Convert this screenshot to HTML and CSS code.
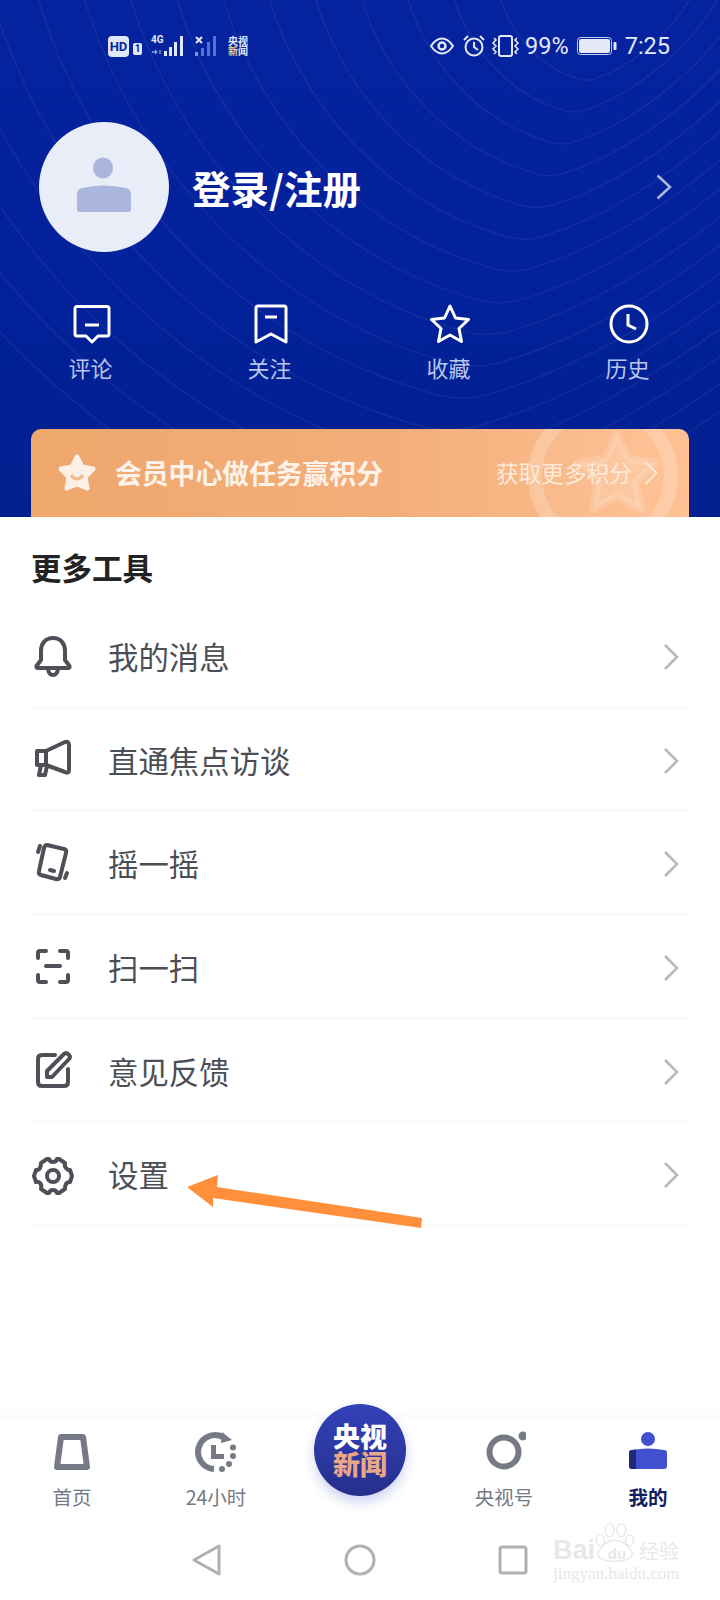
FILE: index.html
```html
<!DOCTYPE html>
<html lang="zh-CN">
<head>
    <meta charset="UTF-8">
    <meta name="viewport" content="width=device-width, initial-scale=1.0">
    <title>我的</title>
    <link rel="stylesheet" href="styles.css">
</head>
<body>
    <!-- Blue header -->
    <header class="hero">
        <svg class="contours" viewBox="0 0 720 517" fill="none">
            <defs>
                <path id="ring" d="M-1.5 -0.25C-1.42 0.35 -1 0.82 -0.5 0.97C-0.42 1 -0.36 1 -0.28 0.97C0.1 0.85 0.65 0.45 0.95 -0.12"/>
            </defs>
            <g class="contour-lines">
                <use href="#ring" transform="translate(618 0) scale(81)"/>
                <use href="#ring" transform="translate(618 0) scale(113)"/>
                <use href="#ring" transform="translate(618 0) scale(145)"/>
                <use href="#ring" transform="translate(618 0) scale(177)"/>
                <use href="#ring" transform="translate(618 0) scale(209)"/>
                <use href="#ring" transform="translate(618 0) scale(241)"/>
                <use href="#ring" transform="translate(618 0) scale(273)"/>
                <use href="#ring" transform="translate(618 0) scale(305)"/>
                <use href="#ring" transform="translate(618 0) scale(337)"/>
                <use href="#ring" transform="translate(618 0) scale(369)"/>
                <use href="#ring" transform="translate(618 0) scale(401)"/>
                <use href="#ring" transform="translate(618 0) scale(433)"/>
                <use href="#ring" transform="translate(618 0) scale(465)"/>
                <use href="#ring" transform="translate(618 0) scale(497)"/>
                <use href="#ring" transform="translate(618 0) scale(529)"/>
                <use href="#ring" transform="translate(618 0) scale(561)"/>
            </g>
        </svg>

        <div class="status-bar">
            <div class="status-left">
                <span class="hd-badge">HD</span>
                <span class="sim-badge">1</span>
                <svg class="signal" width="36" height="22" viewBox="0 0 36 22">
                    <text x="0" y="8" class="signal-label">4G</text>
                    <path d="M1 17h4M4 15l2 2-2 2M9 15v4" stroke="#8fa0dc" stroke-width="1.3" fill="none"/>
                    <rect x="13" y="16" width="3" height="5" fill="#e3e8f8"/>
                    <rect x="18" y="12" width="3" height="9" fill="#e3e8f8"/>
                    <rect x="23" y="7" width="3" height="14" fill="#e3e8f8"/>
                    <rect x="29" y="1" width="3" height="20" fill="#e3e8f8"/>
                </svg>
                <svg class="signal-off" width="24" height="22" viewBox="0 0 24 22">
                    <path d="M1 2l6 6M7 2l-6 6" stroke="#e3e8f8" stroke-width="2"/>
                    <rect x="0" y="17" width="3" height="4" fill="#7f92d6"/>
                    <rect x="6" y="13" width="3" height="8" fill="#5a72c8"/>
                    <rect x="12" y="7" width="3" height="14" fill="#5a72c8"/>
                    <rect x="18" y="1" width="3" height="20" fill="#5a72c8"/>
                </svg>
                <div class="cctv-mini">央视<br><em>新</em>闻</div>
            </div>
            <div class="status-right">
                <svg width="24" height="18" viewBox="0 0 24 18" fill="none" stroke="#e3e8f8">
                    <path d="M1 9C5 3 9 1.500 12 1.500S19 3 23 9C19 15 15 16.500 12 16.500S5 15 1 9Z" stroke-width="2"/>
                    <circle cx="12" cy="9" r="3.500" stroke-width="2.500"/>
                </svg>
                <svg class="alarm" width="24" height="24" viewBox="0 0 24 24" fill="none" stroke="#e3e8f8" stroke-width="2">
                    <circle cx="12" cy="13" r="8.500"/>
                    <path d="M12 8v5l4 3M2 6l4-4M22 6l-4-4"/>
                </svg>
                <svg class="vibrate" width="30" height="22" viewBox="0 0 30 22" fill="none" stroke="#e3e8f8">
                    <rect x="8" y="1" width="13" height="20" rx="2" stroke-width="2"/>
                    <path d="M3 3l2 2-3 3 3 3-3 3 3 3-2 2M26 3l-2 2 3 3-3 3 3 3-3 3 2 2" stroke-width="1.600"/>
                </svg>
                <span class="status-text">99%</span>
                <svg class="battery" width="40" height="18" viewBox="0 0 40 18">
                    <rect x="0.500" y="0.500" width="34" height="17" rx="3" fill="none" stroke="#c8d1f0"/>
                    <rect x="2" y="2" width="31" height="14" rx="2" fill="#e6eaf8"/>
                    <rect x="36.500" y="5" width="3" height="8" rx="1" fill="#e3e8f8"/>
                </svg>
                <span class="status-text time">7:25</span>
            </div>
        </div>

        <div class="profile">
            <div class="avatar">
                <svg width="130" height="130" viewBox="0 0 130 130" fill="#aab6dd">
                    <ellipse cx="64" cy="46" rx="10" ry="10.500"/>
                    <path d="M38 72Q38 67 43 66Q64 61 87 66Q92 67 92 72V87Q92 90 89 90H41Q38 90 38 87Z"/>
                </svg>
            </div>
            <h1 class="login">登录/注册</h1>
            <svg class="profile-arrow" width="16" height="26" viewBox="0 0 16 26" fill="none">
                <path d="M1.500 1.500L14 13L1.500 24.500" stroke="#a9b6e0" stroke-width="2.500"/>
            </svg>
        </div>

        <nav class="shortcuts">
            <div class="shortcut">
                <svg width="40" height="40" viewBox="0 0 40 40" fill="none" stroke="#fff" stroke-width="3" stroke-linejoin="round">
                    <path d="M5 2.500H35A2 2 0 0 1 37 4.500V30A2 2 0 0 1 35 32H26L20 38L14 32H5A2 2 0 0 1 3 30V4.500A2 2 0 0 1 5 2.500Z"/>
                    <path d="M13 21H27"/>
                </svg>
                <span>评论</span>
            </div>
            <div class="shortcut">
                <svg width="40" height="40" viewBox="0 0 40 40" fill="none" stroke="#fff" stroke-width="3" stroke-linejoin="round">
                    <path d="M7 2H33Q35 2 35 4V38L20 30L5 38V4Q5 2 7 2Z"/>
                    <path d="M14 13H26"/>
                </svg>
                <span>关注</span>
            </div>
            <div class="shortcut">
                <svg width="40" height="40" viewBox="0 0 40 40" fill="none" stroke="#fff" stroke-width="3" stroke-linejoin="round">
                    <path d="M20 2L25.500 14L38.500 15.500L29 24.500L31.500 37.500L20 31L8.500 37.500L11 24.500L1.500 15.500L14.500 14Z"/>
                </svg>
                <span>收藏</span>
            </div>
            <div class="shortcut">
                <svg width="40" height="40" viewBox="0 0 40 40" fill="none" stroke="#fff" stroke-width="3">
                    <circle cx="20" cy="20" r="18"/>
                    <path d="M19 10V21L27 25"/>
                </svg>
                <span>历史</span>
            </div>
        </nav>

        <div class="banner">
            <div class="banner-ring"></div>
            <svg class="banner-ghost" width="90" height="88" viewBox="0 0 90 88">
                <path d="M45 6L57 30L84 34L64 53L69 80L45 68L21 80L26 53L6 34L33 30Z" fill="#fff" fill-opacity="0.14" stroke="#fff" stroke-opacity="0.14" stroke-width="8" stroke-linejoin="round"/>
            </svg>
            <svg class="banner-star" width="42" height="40" viewBox="0 0 42 40">
                <path d="M21 4L26 14L37 16L29 24L31 35L21 31L11 35L13 24L5 16L16 14Z" fill="#fdf0e6" stroke="#fdf0e6" stroke-width="5" stroke-linejoin="round"/>
                <path d="M15 22Q21 30 27 22" fill="none" stroke="#f4b98a" stroke-width="3"/>
            </svg>
            <span class="banner-title">会员中心做任务赢积分</span>
            <span class="banner-more">获取更多积分</span>
            <svg class="banner-arrow" width="14" height="24" viewBox="0 0 14 24" fill="none">
                <path d="M1.500 1L12.500 12L1.500 23" stroke="#fde9d8" stroke-width="2"/>
            </svg>
        </div>
    </header>

    <!-- Tools list -->
    <main class="tools">
        <h2 class="tools-title">更多工具</h2>
        <ul class="tool-list">
            <li class="tool-row">
                <svg class="tool-icon" viewBox="0 0 44 44">
                    <path d="M22 5C14 5 10 11 10 18V27L5.500 33Q5 35 7 35H37Q39 35 38.500 33L34 27V18C34 11 30 5 22 5Z"/>
                    <path d="M17 36Q18 42 22 42T27 36"/>
                </svg>
                <span>我的消息</span>
                <svg class="chevron" width="16" height="28" viewBox="0 0 16 28"><path d="M2 2L14 14L2 26"/></svg>
            </li>
            <li class="tool-row">
                <svg class="tool-icon" viewBox="0 0 44 44">
                    <path d="M6 14H15L34 5Q38 4 38 8V33Q38 37 34 35L15 28H6Z"/>
                    <path d="M15 14V28M10 28L8 38H14L16 29"/>
                </svg>
                <span>直通焦点访谈</span>
                <svg class="chevron" width="16" height="28" viewBox="0 0 16 28"><path d="M2 2L14 14L2 26"/></svg>
            </li>
            <li class="tool-row">
                <svg class="tool-icon" viewBox="0 0 44 44">
                    <path d="M16 4L33 8Q36 9 35 12L29 36Q28 39 25 38L10 34Q7 33 8 30L13 7Q14 4 16 4Z"/>
                    <path d="M19 29L23 30M9 5L7 11M36 32L34 37"/>
                </svg>
                <span>摇一摇</span>
                <svg class="chevron" width="16" height="28" viewBox="0 0 16 28"><path d="M2 2L14 14L2 26"/></svg>
            </li>
            <li class="tool-row">
                <svg class="tool-icon" viewBox="0 0 44 44">
                    <path d="M15 7H9Q7 7 7 9V14M29 7H35Q37 7 37 9V14M15 38H9Q7 38 7 36V31M29 38H35Q37 38 37 36V31M15 22H29"/>
                </svg>
                <span>扫一扫</span>
                <svg class="chevron" width="16" height="28" viewBox="0 0 16 28"><path d="M2 2L14 14L2 26"/></svg>
            </li>
            <li class="tool-row">
                <svg class="tool-icon" viewBox="0 0 44 44">
                    <path d="M24 7H11Q7 7 7 11V34Q7 38 11 38H33Q37 38 37 34V21"/>
                    <path d="M16 29V23L33 6Q35 4 37 6L38 7Q40 9 38 11L21 29Z"/>
                </svg>
                <span>意见反馈</span>
                <svg class="chevron" width="16" height="28" viewBox="0 0 16 28"><path d="M2 2L14 14L2 26"/></svg>
            </li>
            <li class="tool-row">
                <svg class="tool-icon gear" viewBox="0 0 44 44">
                    <path d="M16 5H18Q19 8 22 8T26 5H28L34 9Q33 13 36 15T39 16L41 22L39 28Q36 28 35 30T34 35L28 39H26Q25 36 22 36T18 39H16L10 35Q11 31 9 29T5 28L3 22L5 16Q8 16 9 14T10 9Z"/>
                    <circle cx="22" cy="22" r="6"/>
                </svg>
                <span>设置</span>
                <svg class="chevron" width="16" height="28" viewBox="0 0 16 28"><path d="M2 2L14 14L2 26"/></svg>
            </li>
        </ul>
    </main>

    <!-- Orange pointer drawn over the screenshot -->
    <svg class="pointer" width="250" height="60" viewBox="0 0 250 60">
        <path d="M2 12L33 0L32 12L237 43L236 53L28 23L28 32Z" fill="#ff8f3a"/>
    </svg>

    <!-- Bottom tabs -->
    <div class="tab-bar">
        <div class="tab">
            <svg width="44" height="44" viewBox="0 0 44 44" fill="#fff" stroke="#757a84" stroke-width="6" stroke-linejoin="round">
                <path d="M11 7H33L37 37H7Z"/>
            </svg>
            <span>首页</span>
        </div>
        <div class="tab">
            <svg width="44" height="44" viewBox="0 0 44 44" fill="#757a84">
                <path d="M29 7A17 17 0 1 0 20 39" fill="none" stroke="#757a84" stroke-width="6"/>
                <path d="M28 2L38 10L27 13Z"/>
                <circle cx="39" cy="17.500" r="3"/>
                <circle cx="39" cy="26" r="3"/>
                <circle cx="35" cy="34" r="3"/>
                <circle cx="28" cy="39" r="3"/>
                <path d="M19.500 15V26.500H30" fill="none" stroke="#757a84" stroke-width="5"/>
            </svg>
            <span>24小时</span>
        </div>
        <div class="tab-center">
            <div class="cctv-button">央视<br><em>新闻</em></div>
        </div>
        <div class="tab">
            <svg width="44" height="44" viewBox="0 0 44 44" fill="none">
                <ellipse cx="22" cy="22" rx="14.500" ry="14.500" stroke="#757a84" stroke-width="6"/>
                <circle cx="41" cy="6" r="4.500" fill="#757a84"/>
            </svg>
            <span>央视号</span>
        </div>
        <div class="tab tab-active">
            <svg width="44" height="44" viewBox="0 0 44 44">
                <circle cx="22" cy="9" r="7" fill="#4150cf"/>
                <path d="M3 23Q3 20 6 20Q22 17 38 20Q41 20 41 23V36Q41 39 38 39H6Q3 39 3 36Z" fill="#4150cf"/>
                <path d="M3 23Q3 20 6 20L10 19.500V39H6Q3 39 3 36Z" fill="#1f2a7a"/>
            </svg>
            <span>我的</span>
        </div>
    </div>

    <!-- Android nav keys -->
    <div class="nav-keys">
        <svg width="40" height="40" viewBox="0 0 40 40"><path d="M7 20L32 6V34Z"/></svg>
        <svg width="40" height="40" viewBox="0 0 40 40"><circle cx="20" cy="20" r="14"/></svg>
        <svg width="40" height="40" viewBox="0 0 40 40"><rect x="7" y="7" width="26" height="26" rx="2"/></svg>
    </div>

    <!-- Watermark -->
    <div class="watermark">
        <svg class="paw" width="40" height="40" viewBox="0 0 44 44" fill="none" stroke="#e8e8e8" stroke-width="1.500">
            <ellipse cx="6" cy="19" rx="4.500" ry="6"/>
            <ellipse cx="16" cy="8" rx="5" ry="7"/>
            <ellipse cx="29" cy="8" rx="5" ry="7"/>
            <ellipse cx="38" cy="19" rx="4.500" ry="6"/>
            <path d="M3 33Q10 19 22 19T41 33Q41 42 22 42T3 33Z"/>
        </svg>
        <div class="wm-main"><span>Bai</span><span class="wm-du">du</span><span class="wm-cn">经验</span></div>
        <div class="wm-url">jingyan.baidu.com</div>
    </div>
</body>
</html>
```

FILE: styles.css
```css
* {
    box-sizing: border-box;
}
body {
    position: relative;
    display: flex;
    flex-direction: column;
    width: 720px;
    height: 1600px;
    margin: 0;
    overflow: hidden;
    background-color: #fff;
    font-family: "Noto Sans CJK SC", Roboto, sans-serif;
}

/* header */
.hero {
    position: relative;
    height: 517px;
    overflow: hidden;
    background: linear-gradient(180deg, #05239f 0%, #03219a 55%, #02208e 100%);
}
.contours {
    position: absolute;
    top: 0;
    left: 0;
    width: 720px;
    height: 517px;
}
.contour-lines use {
    stroke: rgba(255, 255, 255, 0.06);
    stroke-width: 1.5px;
}
.contours path {
    vector-effect: non-scaling-stroke;
}

/* status bar */
.status-bar {
    position: relative;
    display: flex;
    justify-content: space-between;
    align-items: center;
    height: 92px;
    padding: 0 50px 0 108px;
    color: #e3e8f8;
}
.status-left,
.status-right {
    display: flex;
    align-items: center;
}
.hd-badge {
    width: 21px;
    height: 21px;
    border-radius: 4px;
    background-color: #e3e8f8;
    color: #05239f;
    font: bold 13px/21px Roboto, sans-serif;
    text-align: center;
}
.sim-badge {
    width: 9px;
    height: 12px;
    margin: 6px 0 0 4px;
    border-radius: 2px;
    background-color: #e3e8f8;
    color: #05239f;
    font: bold 10px/12px Roboto, sans-serif;
    text-align: center;
}
.signal {
    margin-left: 9px;
}
.signal-label {
    fill: #e3e8f8;
    font: bold 10px Roboto, sans-serif;
}
.signal-off {
    margin-left: 8px;
}
.cctv-mini {
    margin-left: 9px;
    font-size: 10px;
    font-weight: 700;
    line-height: 10.5px;
    color: #e3e8f8;
}
.cctv-mini em {
    font-style: normal;
    color: #e5cf8f;
}
.status-text {
    font: 23.500px Roboto, sans-serif;
}
.status-right .alarm {
    margin-left: 8px;
}
.status-right .vibrate {
    margin-left: 5px;
}
.status-right .status-text {
    margin-left: 4px;
}
.status-right .battery {
    margin-left: 8px;
}
.status-right .time {
    margin-left: 8px;
}

/* profile row */
.profile {
    position: relative;
    display: flex;
    align-items: center;
    height: 130px;
    margin-top: 30px;
    padding: 0 48px 0 39px;
}
.avatar {
    width: 130px;
    height: 130px;
    border-radius: 50%;
    background-color: #e9edf8;
}
.avatar svg {
    display: block;
}
.login {
    flex: 1;
    margin: 0 0 0 23px;
    color: #fff;
    font-size: 38.500px;
    font-weight: 700;
}

/* shortcuts */
.shortcuts {
    position: relative;
    display: grid;
    grid-template-columns: repeat(4, 1fr);
    margin-top: 52px;
    padding: 0 2px;
}
.shortcut {
    display: flex;
    flex-direction: column;
    align-items: center;
    color: #bac6ee;
    font-size: 22px;
    line-height: 32px;
}
.shortcut svg {
    margin-bottom: 7px;
}
.shortcut span {
    margin-right: 2px;
}

/* member banner */
.banner {
    position: relative;
    display: flex;
    align-items: center;
    height: 90px;
    margin: 46px 31px 0;
    padding: 0 31px 3px 25px;
    overflow: hidden;
    border-radius: 10px 10px 0 0;
    background: linear-gradient(90deg, #eea76c 0%, #f3ae7a 55%, #ffc193 100%);
}
.banner-ring {
    position: absolute;
    top: -28px;
    left: 497px;
    width: 150px;
    height: 150px;
    border: 14px solid rgba(255, 255, 255, 0.18);
    border-radius: 50%;
    background-color: rgba(255, 255, 255, 0.04);
}
.banner-ghost {
    position: absolute;
    top: 0;
    left: 541px;
}
.banner-star {
    position: relative;
    margin-right: 17px;
}
.banner-title {
    position: relative;
    flex: 1;
    color: #fdf3ea;
    font-size: 26.800px;
    font-weight: 700;
}
.banner-more {
    position: relative;
    color: #fdeadb;
    font-size: 22.700px;
}
.banner-arrow {
    position: relative;
    margin-left: 12px;
}

/* tools list */
.tools {
    flex: 1;
}
.tools-title {
    height: 87px;
    margin: 0;
    padding: 29px 0 0 31px;
    color: #222;
    font-size: 30.500px;
    font-weight: 700;
    line-height: 42px;
}
.tool-list {
    margin: 0;
    padding: 0 28px 0 32px;
    list-style: none;
}
.tool-row {
    display: flex;
    align-items: center;
    height: 103.700px;
    border-bottom: 1px solid #f5f5f5;
    color: #4b4f55;
    font-size: 30.400px;
}
.tool-row span {
    flex: 1;
    padding-top: 1px;
}
.tool-icon {
    width: 44px;
    height: 44px;
    margin: 0 33px 0 -1px;
    fill: none;
    stroke: #4d5157;
    stroke-width: 4;
    stroke-linejoin: round;
    stroke-linecap: round;
}
.gear {
    margin-top: 4px;
}
.chevron {
    margin: 3px 13px 0 0;
    fill: none;
    stroke: #b4b8bd;
    stroke-width: 2.500;
}

/* annotation */
.pointer {
    position: absolute;
    top: 1175px;
    left: 185px;
}

/* tab bar */
.tab-bar {
    display: grid;
    grid-template-columns: repeat(5, 1fr);
    height: 105px;
    padding-top: 10px;
    box-shadow: 0 -6px 8px rgba(0, 0, 0, 0.02);
    background-color: #fff;
}
.tab {
    display: flex;
    flex-direction: column;
    align-items: center;
    color: #757a84;
    font-size: 19.500px;
    line-height: 28px;
}
.tab svg {
    margin-bottom: 9px;
}
.tab-active {
    color: #10205f;
    font-weight: 700;
}
.tab-center {
    display: flex;
    justify-content: center;
}
.cctv-button {
    width: 92px;
    height: 92px;
    margin-top: -26px;
    padding-top: 18px;
    border-radius: 50%;
    background: linear-gradient(180deg, #3341b8 0%, #262f8d 100%);
    box-shadow: 0 6px 12px rgba(60, 80, 200, 0.25);
    color: #fff;
    font-size: 27px;
    font-weight: 900;
    line-height: 28px;
    text-align: center;
}
.cctv-button em {
    font-style: normal;
    color: #e8a787;
}

/* android keys */
.nav-keys {
    display: flex;
    justify-content: center;
    gap: 113px;
    height: 75px;
    padding-top: 15px;
}
.nav-keys svg {
    fill: none;
    stroke: #b0b0b0;
    stroke-width: 3;
    stroke-linejoin: round;
}

/* watermark */
.watermark {
    position: absolute;
    top: 1523px;
    left: 553px;
    width: 130px;
    color: #e8e8e8;
}
.paw {
    position: absolute;
    top: 0;
    left: 42px;
}
.wm-main {
    display: flex;
    align-items: baseline;
    height: 42px;
    padding-top: 10px;
    font: 700 27px/34px "Liberation Sans", sans-serif;
    white-space: nowrap;
}
.wm-du {
    width: 44px;
    font-size: 15px;
    text-align: center;
}
.wm-cn {
    font: 20px/34px "Noto Sans CJK SC", sans-serif;
}
.wm-url {
    font: 17px/18px "Liberation Serif", serif;
    white-space: nowrap;
}
```
